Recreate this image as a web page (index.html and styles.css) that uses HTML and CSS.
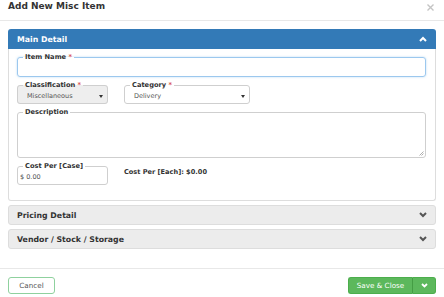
FILE: index.html
```html
<!DOCTYPE html>
<html>
<head>
<meta charset="utf-8">
<link rel="stylesheet" href="styles.css">
</head>
<body>
<div class="modal">
  <div class="modal-header">
    <h1 class="title">Add New Misc Item</h1>
    <svg class="close" width="7" height="7" viewBox="0 0 7 7"><path d="M0.5 0.5L6.5 6.5M6.5 0.5L0.5 6.5" stroke="#c4c4c4" stroke-width="1.4"/></svg>
  </div>
  <div class="modal-body">
    <div class="panel panel-primary">
      <div class="panel-heading">
        <span>Main Detail</span>
        <svg class="chev" width="8" height="6" viewBox="0 0 8 6"><path d="M1 5L4 2L7 5" fill="none" stroke="#fff" stroke-width="2"/></svg>
      </div>
      <div class="panel-body">
        <fieldset class="field focus">
          <legend>Item Name <span class="req">*</span></legend>
          <div class="val tall"></div>
        </fieldset>
        <div class="row">
          <fieldset class="field narrow disabled">
            <legend>Classification <span class="req">*</span></legend>
            <div class="val select"><span>Miscellaneous</span><svg width="4" height="3" viewBox="0 0 4 3"><path d="M0 0H4L2 3Z" fill="#333"/></svg></div>
          </fieldset>
          <fieldset class="field wide">
            <legend>Category <span class="req">*</span></legend>
            <div class="val select"><span>Delivery</span><svg width="4" height="3" viewBox="0 0 4 3"><path d="M0 0H4L2 3Z" fill="#333"/></svg></div>
          </fieldset>
        </div>
        <fieldset class="field">
          <legend>Description</legend>
          <div class="val area"><svg class="grip" width="5" height="5" viewBox="0 0 5 5"><path d="M0.5 4.5L4.5 0.5M2.5 4.5L4.5 2.5" stroke="#999" stroke-width="0.8"/></svg></div>
        </fieldset>
        <div class="row">
          <fieldset class="field narrow">
            <legend>Cost Per [Case]</legend>
            <div class="val input">$ 0.00</div>
          </fieldset>
          <div class="each">Cost Per [Each]: $0.00</div>
        </div>
      </div>
    </div>
    <div class="panel panel-default">
      <div class="panel-heading">
        <span>Pricing Detail</span>
        <svg class="chev" width="8" height="6" viewBox="0 0 8 6"><path d="M1 1L4 4L7 1" fill="none" stroke="#555" stroke-width="2"/></svg>
      </div>
    </div>
    <div class="panel panel-default">
      <div class="panel-heading">
        <span>Vendor / Stock / Storage</span>
        <svg class="chev" width="8" height="6" viewBox="0 0 8 6"><path d="M1 1L4 4L7 1" fill="none" stroke="#555" stroke-width="2"/></svg>
      </div>
    </div>
  </div>
  <div class="modal-footer">
    <button class="btn btn-cancel">Cancel</button>
    <div class="btn-group">
      <button class="btn btn-save">Save &amp; Close</button>
      <button class="btn btn-drop"><svg width="7" height="5" viewBox="0 0 7 5"><path d="M1 1L3.5 3.5L6 1" fill="none" stroke="#fff" stroke-width="1.8"/></svg></button>
    </div>
  </div>
</div>
</body>
</html>
```

FILE: styles.css
```css
* { box-sizing: border-box; }

body {
  margin: 0;
  width: 444px;
  height: 297px;
  overflow: hidden;
  background: #fff;
  color: #333;
  font-family: "DejaVu Sans", Verdana, sans-serif;
}

.modal-header {
  height: 21px;
  border-bottom: 1px solid #e8e8e8;
  display: flex;
  justify-content: space-between;
  align-items: flex-start;
  padding: 2px 10px 0 8px;
}

.title {
  margin: 0;
  font-size: 9px;
  line-height: 9px;
  font-weight: bold;
  color: #333;
}

.close { margin-top: 2px; }

.modal-body {
  padding: 8px 8px 19px;
  display: flex;
  flex-direction: column;
  gap: 4px;
}

.panel { border-radius: 3px; }

.panel-heading {
  height: 20px;
  display: flex;
  align-items: center;
  justify-content: space-between;
  padding: 0 9px 0 9px;
  font-size: 7.8px;
  font-weight: bold;
}

.panel-primary .panel-heading {
  background: #337ab7;
  color: #fff;
  border-radius: 3px 3px 0 0;
}

.panel-default {
  border: 1px solid #ddd;
  background: #ececec;
}

.panel-default .panel-heading {
  height: 18px;
  padding: 0 8px;
  color: #333;
}

.panel-body {
  border: 1px solid #ddd;
  border-top: 0;
  border-radius: 0 0 3px 3px;
  padding: 4px 9px 15px 8px;
  display: flex;
  flex-direction: column;
  gap: 4px;
}

.row {
  display: flex;
  align-items: flex-start;
  gap: 16px;
}

.field {
  margin: 0;
  padding: 0;
  min-width: 0;
  border: 1px solid #cfcfcf;
  border-radius: 3px;
}

.field legend {
  margin-left: 5px;
  padding: 0 2px;
  font-size: 6.7px;
  line-height: 8px;
  font-weight: bold;
  color: #333;
}

.req { color: #d9534f; }

.focus {
  border-color: #9cc8ee;
  box-shadow: 0 0 2px rgba(102, 175, 233, 0.5);
}

.narrow { width: 91px; }
.wide { width: 126px; }

.disabled { background: #eee; }

.val {
  height: 14px;
  font-size: 6.5px;
  color: #555;
  display: flex;
  align-items: center;
}

.val.tall { height: 15px; }

.select {
  justify-content: space-between;
  padding: 0 4px 0 9px;
}

.input { padding: 0 2px; }

.area {
  height: 41px;
  align-items: flex-end;
  justify-content: flex-end;
  padding: 0 1px 1px 0;
}

.each {
  padding-top: 6px;
  padding-left: 0;
  font-size: 6.6px;
  font-weight: bold;
  color: #333;
}

.modal-footer {
  border-top: 1px solid #e8e8e8;
  padding: 8px 8px 0 8px;
  display: flex;
  justify-content: space-between;
}

.btn {
  font-family: "DejaVu Sans", Verdana, sans-serif;
  font-size: 7.2px;
  height: 17px;
  margin: 0;
  border-radius: 3px;
  cursor: pointer;
  display: flex;
  align-items: center;
  justify-content: center;
}

.btn-cancel {
  width: 47px;
  background: #fff;
  color: #555;
  border: 1px solid #8fd19e;
}

.btn-group { display: flex; }

.btn-save {
  width: 65px;
  background: #5cb85c;
  color: #fff;
  border: 1px solid #4cae4c;
  border-right: 1px solid #449d44;
  border-radius: 3px 0 0 3px;
}

.btn-drop {
  width: 23px;
  background: #5cb85c;
  border: 1px solid #4cae4c;
  border-left: 0;
  border-radius: 0 3px 3px 0;
  padding: 0;
}
```
